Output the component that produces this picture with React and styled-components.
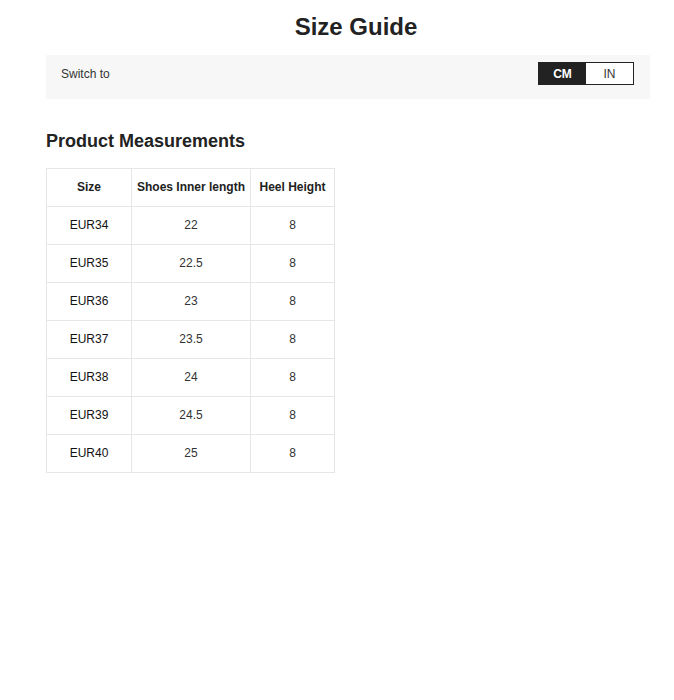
import { useState } from "react";
import styled, { createGlobalStyle } from "styled-components";

const rows = [
    { size: "EUR34", length: "22", heel: "8" },
    { size: "EUR35", length: "22.5", heel: "8" },
    { size: "EUR36", length: "23", heel: "8" },
    { size: "EUR37", length: "23.5", heel: "8" },
    { size: "EUR38", length: "24", heel: "8" },
    { size: "EUR39", length: "24.5", heel: "8" },
    { size: "EUR40", length: "25", heel: "8" },
];

function App() {
    const [unit, setUnit] = useState("CM");

    return (
        <>
            <GlobalStyle />
            <Page>
                <Title>Size Guide</Title>
                <SwitchBar>
                    <SwitchLabel>Switch to</SwitchLabel>
                    <Toggle>
                        <ToggleButton active={unit === "CM"} onClick={() => setUnit("CM")}>CM</ToggleButton>
                        <ToggleButton active={unit === "IN"} onClick={() => setUnit("IN")}>IN</ToggleButton>
                    </Toggle>
                </SwitchBar>
                <SectionTitle>Product Measurements</SectionTitle>
                <Table>
                    <thead>
                        <tr>
                            <Th width={85}>Size</Th>
                            <Th width={119}>Shoes Inner length</Th>
                            <Th width={84}>Heel Height</Th>
                        </tr>
                    </thead>
                    <tbody>
                        {rows.map(row => (
                            <tr key={row.size}>
                                <Td dark>{row.size}</Td>
                                <Td>{row.length}</Td>
                                <Td>{row.heel}</Td>
                            </tr>
                        ))}
                    </tbody>
                </Table>
            </Page>
        </>
    );
}

export default App;

const GlobalStyle = createGlobalStyle`
    * {
        box-sizing: border-box;
    }

    body {
        margin: 0;
        background-color: #FFFFFF;
        font-family: "Liberation Sans", Arial, sans-serif;
        color: #222222;
    }
`;

const Page = styled.div`
    padding: 0 24px 0 46px;
`;

const Title = styled.h1`
    margin: 0;
    padding: 13px 0 0 0;
    margin-right: -16px;
    height: 55px;

    font-size: 24px;
    line-height: 28px;
    font-weight: 700;
    text-align: center;
    color: #222222;
`;

const SwitchBar = styled.div`
    background-color: #F7F7F7;

    height: 44px;
    padding: 7px 16px 0 15px;

    display: flex;
    justify-content: space-between;
    align-items: flex-start;
`;

const SwitchLabel = styled.span`
    font-size: 12px;
    line-height: 22px;
    padding-top: 1px;
    color: #333333;
`;

const Toggle = styled.div`
    display: flex;
    border: 1px solid #222222;
    height: 23px;
`;

const ToggleButton = styled.button`
    background-color: ${props => props.active ? "#222222" : "#FFFFFF"};
    color: ${props => props.active ? "#FFFFFF" : "#333333"};
    border: none;
    cursor: pointer;

    width: 47px;
    height: 21px;
    padding: 0;

    font-family: inherit;
    font-size: 12px;
    font-weight: ${props => props.active ? 700 : 400};
`;

const SectionTitle = styled.h2`
    margin: 0;
    padding-top: 32px;
    height: 69px;

    font-size: 18px;
    line-height: 21px;
    font-weight: 700;
    color: #222222;
`;

const Table = styled.table`
    border-collapse: collapse;
    table-layout: fixed;
    width: 289px;
`;

const Th = styled.th`
    width: ${props => props.width}px;
    height: 38px;
    padding: 0 0 2px 0;
    border: 1px solid #E6E6E6;

    font-size: 12px;
    font-weight: 700;
    text-align: center;
    color: #222222;
`;

const Td = styled.td`
    height: 38px;
    padding: 0 0 2px 0;
    border: 1px solid #E6E6E6;

    font-size: 12px;
    font-weight: 400;
    text-align: center;
    color: ${props => props.dark ? "#111111" : "#333333"};
`;
